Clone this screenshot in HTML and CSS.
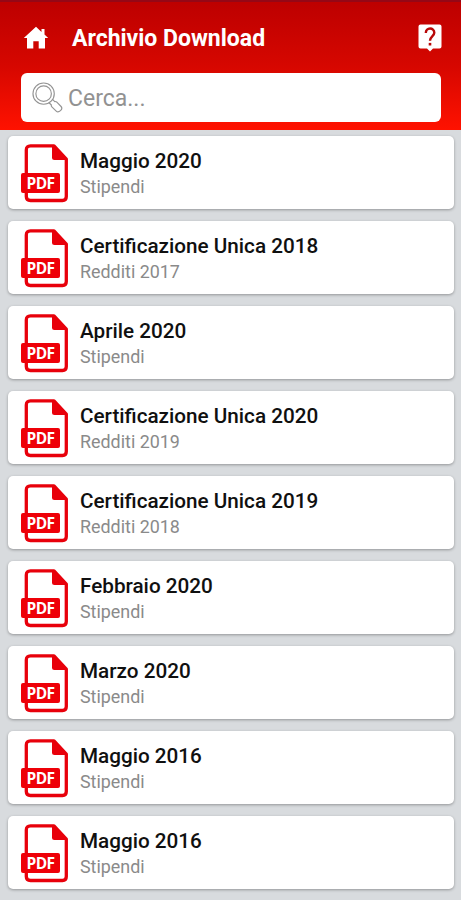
FILE: index.html
```
<!DOCTYPE html>
<html lang="it">
<head>
<meta charset="utf-8">
<title>Archivio Download</title>
<link rel="stylesheet" href="styles.css">
</head>
<body>
<svg class="defs" aria-hidden="true">
  <symbol id="pdf" viewBox="0 0 48 60">
    <path d="M33 2.800H9.500Q5.300 2.800 5.300 7V53.500Q5.300 57.500 9.500 57.500H41.500Q45.300 57.500 45.300 53.500V16Z" fill="#fff" stroke="#e8000b" stroke-width="3.300" stroke-linejoin="round"/>
    <path d="M31 2L46.500 17H33.500Q31 17 31 14.500Z" fill="#e8000b"/>
  </symbol>
</svg>
<header class="header">
  <div class="bar">
    <svg class="home" viewBox="0 0 26 24"><path d="M13 0.800L0.800 12H4V22.500H10.300V15.200H15.700V22.500H22V12H25.200L21.500 8.600V3H18.500V5.900Z" fill="#fff"/></svg>
    <h1 class="title">Archivio Download</h1>
    <svg class="help" viewBox="0 0 24 28"><path d="M2.500 0.500H21.500Q23.500 0.500 23.500 2.500V22.500Q23.500 24.500 21.500 24.500H15L12 27.500L9 24.500H2.500Q0.500 24.500 0.500 22.500V2.500Q0.500 0.500 2.500 0.500Z" fill="#fff"/><path d="M7.800 9C7.800 3 16.300 3 16.300 8.800C16.300 12 12 12.300 12 16.800" fill="none" stroke="#b80808" stroke-width="2.400"/><rect x="10.700" y="18.900" width="2.600" height="2.600" fill="#b80808"/></svg>
  </div>
  <div class="search">
    <svg class="lens" viewBox="0 0 32 32" fill="none" stroke="#949494" stroke-width="1.200"><circle cx="12" cy="12" r="11"/><circle cx="12" cy="12" r="8"/><path d="M17.600 21.400L20 23.700Q19.700 24.800 20.500 25.600L25 30.100C27.500 32.500 32.500 28 30 25.300L25.400 20.600Q24.500 19.800 23.500 20.300L21.200 18"/></svg>
    <span class="hint">Cerca...</span>
  </div>
</header>
<main class="list">
  <article class="card"><div class="file"><svg class="pdf"><use href="#pdf"/></svg><span class="badge">PDF</span></div><div class="text"><h2>Maggio 2020</h2><p>Stipendi</p></div></article>
  <article class="card"><div class="file"><svg class="pdf"><use href="#pdf"/></svg><span class="badge">PDF</span></div><div class="text"><h2>Certificazione Unica 2018</h2><p>Redditi 2017</p></div></article>
  <article class="card"><div class="file"><svg class="pdf"><use href="#pdf"/></svg><span class="badge">PDF</span></div><div class="text"><h2>Aprile 2020</h2><p>Stipendi</p></div></article>
  <article class="card"><div class="file"><svg class="pdf"><use href="#pdf"/></svg><span class="badge">PDF</span></div><div class="text"><h2>Certificazione Unica 2020</h2><p>Redditi 2019</p></div></article>
  <article class="card"><div class="file"><svg class="pdf"><use href="#pdf"/></svg><span class="badge">PDF</span></div><div class="text"><h2>Certificazione Unica 2019</h2><p>Redditi 2018</p></div></article>
  <article class="card"><div class="file"><svg class="pdf"><use href="#pdf"/></svg><span class="badge">PDF</span></div><div class="text"><h2>Febbraio 2020</h2><p>Stipendi</p></div></article>
  <article class="card"><div class="file"><svg class="pdf"><use href="#pdf"/></svg><span class="badge">PDF</span></div><div class="text"><h2>Marzo 2020</h2><p>Stipendi</p></div></article>
  <article class="card"><div class="file"><svg class="pdf"><use href="#pdf"/></svg><span class="badge">PDF</span></div><div class="text"><h2>Maggio 2016</h2><p>Stipendi</p></div></article>
  <article class="card"><div class="file"><svg class="pdf"><use href="#pdf"/></svg><span class="badge">PDF</span></div><div class="text"><h2>Maggio 2016</h2><p>Stipendi</p></div></article>
</main>
</body>
</html>
```
FILE: styles.css
```
* { box-sizing: border-box; }
body {
  margin: 0;
  height: 900px;
  overflow: hidden;
  background: #d8dbde;
  font-family: Roboto, "Liberation Sans", sans-serif;
}
h1, h2, p { margin: 0; }
.defs { position: absolute; width: 0; height: 0; }
.header {
  height: 130px;
  border-top: 2px solid #950716;
  background: linear-gradient(#bd0000, #d60700 50%, #ff1200);
}
.bar {
  height: 71px;
  padding: 0 19px 0 23px;
  display: flex;
  align-items: center;
}
.home { width: 26px; height: 24px; }
.title {
  flex: 1;
  margin-left: 23px;
  padding-top: 2px;
  color: #fff;
  font-size: 23px;
  font-weight: 700;
  line-height: 28px;
}
.help { width: 24px; height: 28px; }
.search {
  height: 49px;
  margin: 0 20px 0 21px;
  padding-left: 11px;
  display: flex;
  align-items: center;
  gap: 5px;
  background: #fff;
  border-radius: 6px;
  color: #929292;
  font-size: 23px;
}
.hint { padding-top: 2px; }
.lens { width: 31px; height: 31px; }
.list {
  padding: 6px 7px 0 8px;
  display: grid;
  gap: 12px;
}
.card {
  height: 73px;
  padding-left: 13px;
  display: flex;
  align-items: center;
  gap: 11px;
  background: #fff;
  border-radius: 5px;
  box-shadow: 0 1px 3px rgba(0, 0, 0, .32);
}
.file { position: relative; width: 48px; height: 60px; }
.pdf { display: block; width: 48px; height: 60px; }
.badge {
  position: absolute;
  left: 0;
  top: 30px;
  width: 39px;
  height: 20px;
  border-radius: 2px;
  background: #ee0008;
  color: #fff;
  font: 700 15.500px/20px "Open Sans", sans-serif;
  letter-spacing: -0.600px;
  text-align: center;
}
.text { padding-top: 2px; }
.card h2 {
  color: #101010;
  font-size: 20.700px;
  font-weight: 500;
  line-height: 26px;
}
.card p {
  color: #8a8a8a;
  font-size: 17.900px;
  line-height: 26px;
}
```
